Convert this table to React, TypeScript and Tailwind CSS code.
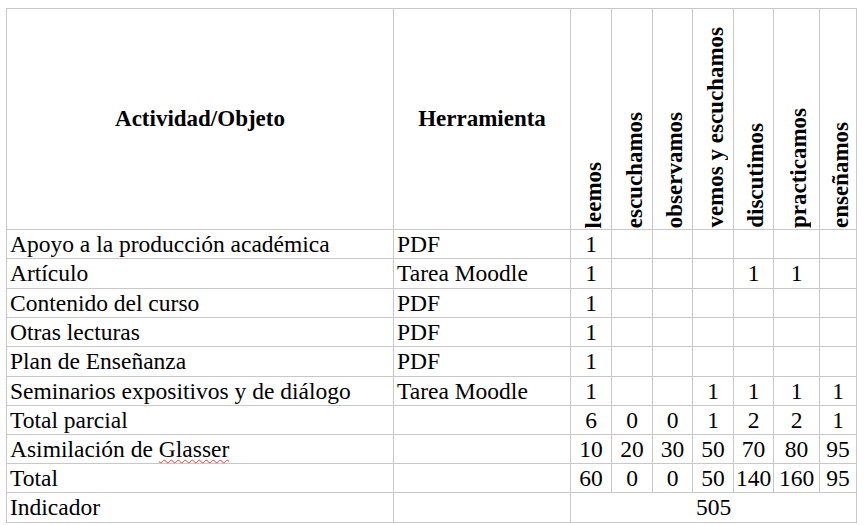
import React from 'react';

type Row = { name: React.ReactNode; tool: string; values: string[] };

const headers = [
  'leemos',
  'escuchamos',
  'observamos',
  'vemos y escuchamos',
  'discutimos',
  'practicamos',
  'enseñamos',
];

const rows: Row[] = [
  { name: 'Apoyo a la producción académica', tool: 'PDF', values: ['1', '', '', '', '', '', ''] },
  { name: 'Artículo', tool: 'Tarea Moodle', values: ['1', '', '', '', '1', '1', ''] },
  { name: 'Contenido del curso', tool: 'PDF', values: ['1', '', '', '', '', '', ''] },
  { name: 'Otras lecturas', tool: 'PDF', values: ['1', '', '', '', '', '', ''] },
  { name: 'Plan de Enseñanza', tool: 'PDF', values: ['1', '', '', '', '', '', ''] },
  { name: 'Seminarios expositivos y de diálogo', tool: 'Tarea Moodle', values: ['1', '', '', '1', '1', '1', '1'] },
  { name: 'Total parcial', tool: '', values: ['6', '0', '0', '1', '2', '2', '1'] },
  {
    name: (
      <>
        Asimilación de{' '}
        <span className="underline decoration-wavy decoration-[#e0463c] decoration-1 underline-offset-[2px]">Glasser</span>
      </>
    ),
    tool: '',
    values: ['10', '20', '30', '50', '70', '80', '95'],
  },
  { name: 'Total', tool: '', values: ['60', '0', '0', '50', '140', '160', '95'] },
];

const App: React.FC = () => {
  return (
    <div className="min-h-screen bg-white pt-[8px] pl-[6px] text-black [font-family:Liberation_Serif,Times_New_Roman,serif] text-[23.5px]">
      <div className="grid w-fit gap-px bg-[#c8c8c8] p-px grid-cols-[386px_176px_40px_40px_39px_40px_39px_45px_36px] grid-rows-[220px_28px_29px_28px_28px_29px_28px_28px_28px_28px_29px] leading-[28px]">
        {/* Header */}
        <div className="bg-white flex items-center justify-center font-bold text-[23px]">Actividad/Objeto</div>
        <div className="bg-white flex items-center justify-center font-bold text-[23px]">Herramienta</div>
        {headers.map((h) => (
          <div key={h} className="bg-white flex items-end justify-center pb-[1px] pl-[5px]">
            <span className="font-bold text-[23px] leading-[26px] whitespace-nowrap [writing-mode:vertical-rl] rotate-180">{h}</span>
          </div>
        ))}

        {/* Body */}
        {rows.map((r, i) => (
          <React.Fragment key={i}>
            <div className="bg-white pl-[3px] whitespace-nowrap">{r.name}</div>
            <div className="bg-white pl-[3px] whitespace-nowrap">{r.tool}</div>
            {r.values.map((v, j) => (
              <div key={j} className="bg-white text-center">{v}</div>
            ))}
          </React.Fragment>
        ))}

        {/* Indicador */}
        <div className="bg-white pl-[3px]">Indicador</div>
        <div className="bg-white"></div>
        <div className="bg-white col-span-7 text-center">505</div>
      </div>
    </div>
  );
};

export default App;
